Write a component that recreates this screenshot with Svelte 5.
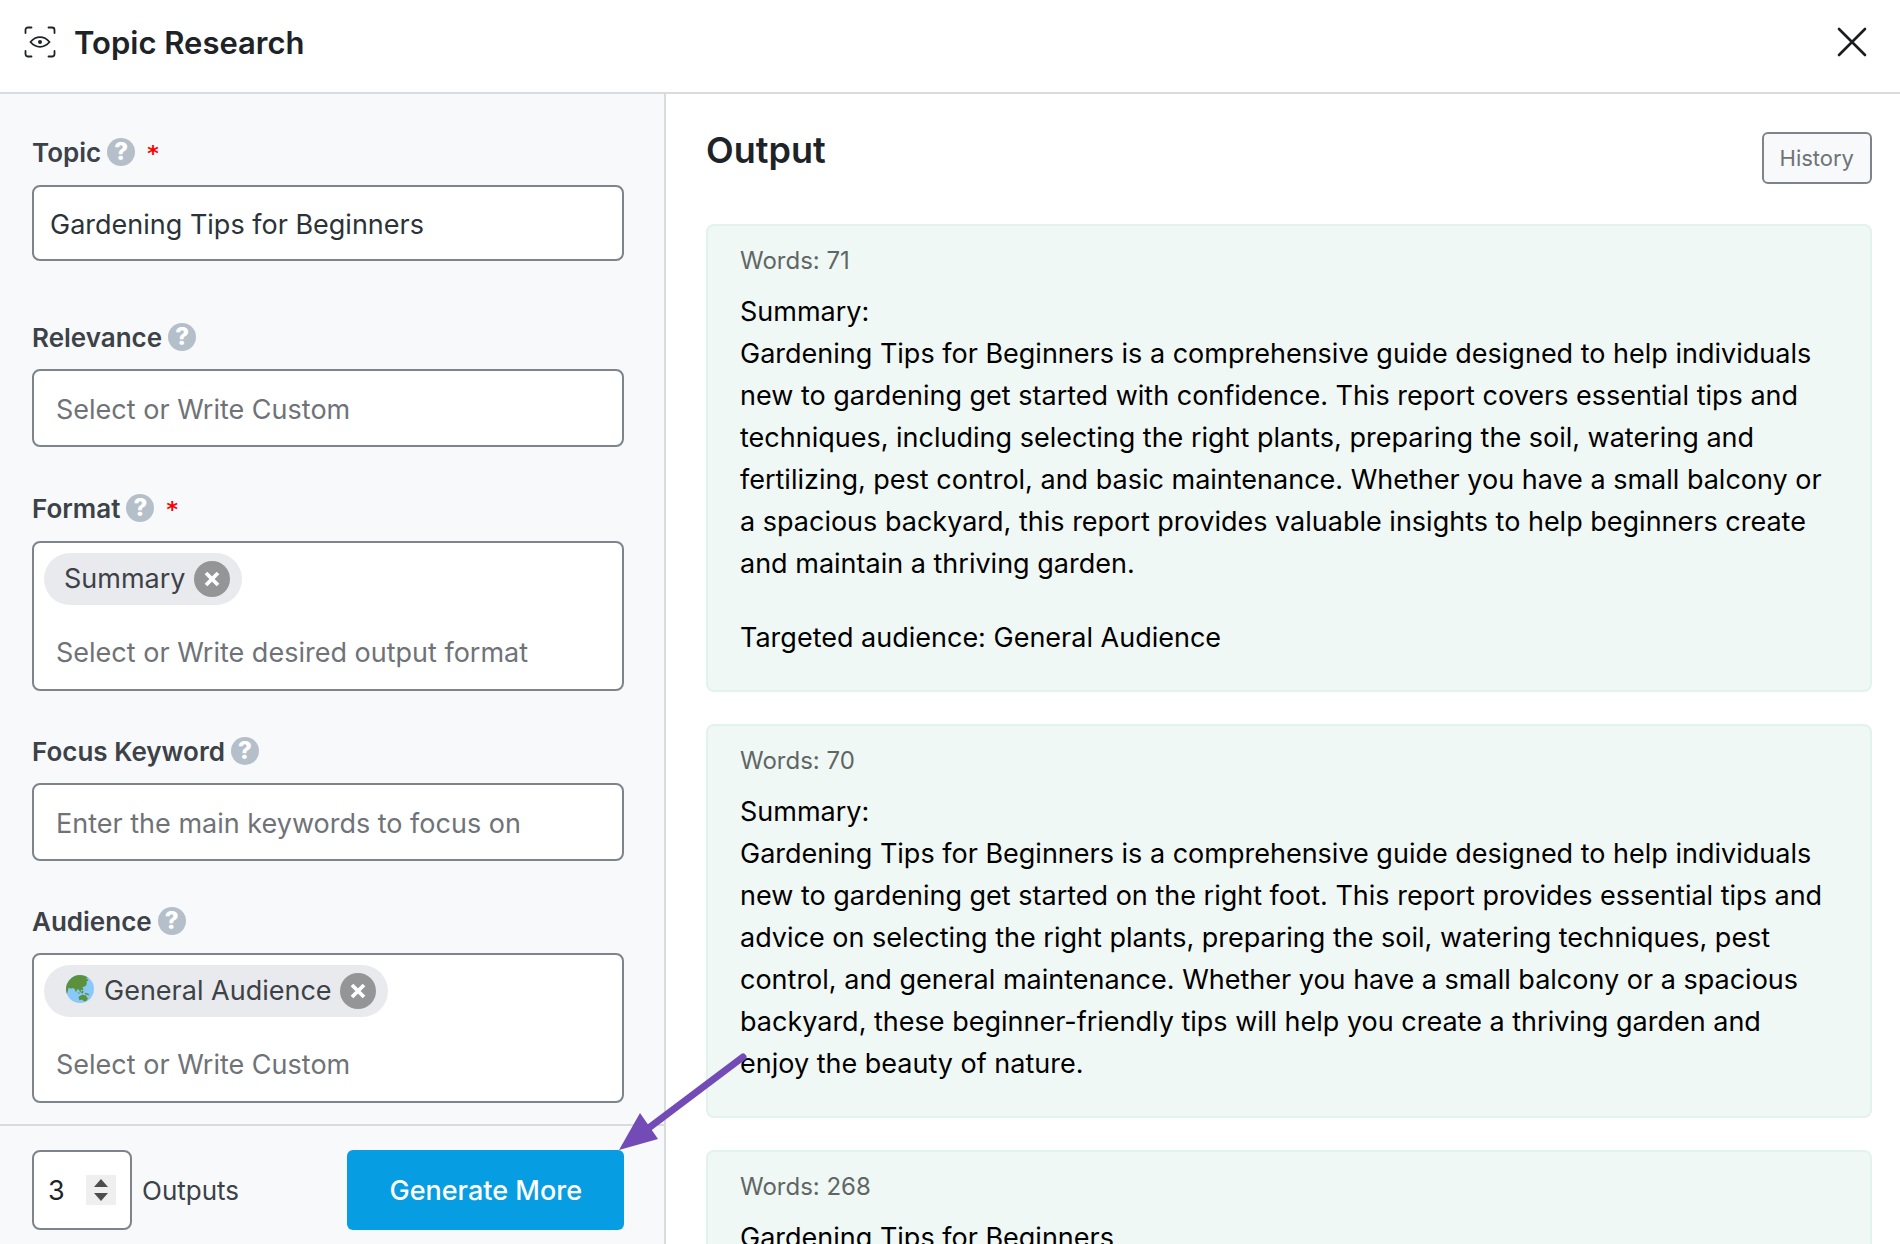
<script>
  let topic = $state('Gardening Tips for Beginners');
  let outputs = $state(3);
  let formats = $state(['Summary']);
  let audiences = $state(['General Audience']);

  const results = [
    {
      words: 71,
      paragraphs: [
        'Summary:\nGardening Tips for Beginners is a comprehensive guide designed to help individuals new to gardening get started with confidence. This report covers essential tips and techniques, including selecting the right plants, preparing the soil, watering and fertilizing, pest control, and basic maintenance. Whether you have a small balcony or a spacious backyard, this report provides valuable insights to help beginners create and maintain a thriving garden.',
        'Targeted audience: General Audience'
      ]
    },
    {
      words: 70,
      paragraphs: [
        'Summary:\nGardening Tips for Beginners is a comprehensive guide designed to help individuals new to gardening get started on the right foot. This report provides essential tips and advice on selecting the right plants, preparing the soil, watering techniques, pest control, and general maintenance. Whether you have a small balcony or a spacious backyard, these beginner-friendly tips will help you create a thriving garden and enjoy the beauty of nature.'
      ]
    },
    { words: 268, paragraphs: ['Gardening Tips for Beginners'] }
  ];
</script>

{#snippet label(id, text, required = false)}
  <div class="label" class:required>
    <label for={id}>{text}</label>
    <span class="help">?</span>
    {#if required}<span class="star">*</span>{/if}
  </div>
{/snippet}

{#snippet remove(name, action)}
  <button class="remove" type="button" aria-label="Remove {name}" onclick={action}>
    <svg viewBox="0 0 36 36" width="36" height="36">
      <circle cx="18" cy="18" r="18" fill="#949596" />
      <path d="M12 12l12 12M24 12l-12 12" stroke="#fff" stroke-width="3.800" />
    </svg>
  </button>
{/snippet}

<div class="page">
  <header>
    <svg class="logo" viewBox="0 0 32 32" width="32" height="32" fill="none" stroke="#1d2327" stroke-width="1.800" stroke-linecap="round">
      <path d="M1.500 7V4a2.500 2.500 0 0 1 2.500-2.500h3.500M24.500 1.500H28A2.500 2.500 0 0 1 30.500 4v3M30.500 25v3a2.500 2.500 0 0 1-2.500 2.500h-3.500M7.500 30.500H4A2.500 2.500 0 0 1 1.500 28v-3" />
      <path d="M6.500 16C9 13 12.300 11.200 16 11.200S23 13 25.500 16C23 19 19.700 20.800 16 20.800S9 19 6.500 16Z" />
      <circle cx="16" cy="16" r="2" fill="#1d2327" stroke="none" />
    </svg>
    <h1>Topic Research</h1>
    <button class="close" type="button" aria-label="Close">
      <svg viewBox="0 0 30 30" width="30" height="30" stroke="#1a1d20" stroke-width="2.600" stroke-linecap="round">
        <path d="M2 2l26 26M28 2L2 28" />
      </svg>
    </button>
  </header>

  <div class="body">
    <aside>
      <form id="research" onsubmit={(e) => e.preventDefault()}>
        <div class="field topic">
          {@render label('topic', 'Topic', true)}
          <input id="topic" class="box" type="text" bind:value={topic} />
        </div>
        <div class="field">
          {@render label('relevance', 'Relevance')}
          <input id="relevance" class="box tall" type="text" placeholder="Select or Write Custom" />
        </div>
        <div class="field">
          {@render label('format', 'Format', true)}
          <div class="tags">
            {#each formats as name}
              <span class="chip">{name}{@render remove(name, () => (formats = []))}</span>
            {/each}
            <input id="format" type="text" placeholder="Select or Write desired output format" />
          </div>
        </div>
        <div class="field">
          {@render label('keyword', 'Focus Keyword')}
          <input id="keyword" class="box tall" type="text" placeholder="Enter the main keywords to focus on" />
        </div>
        <div class="field">
          {@render label('audience', 'Audience')}
          <div class="tags">
            {#each audiences as name}
              <span class="chip">
                <svg class="globe" viewBox="0 0 28 28" width="28" height="28">
                  <circle cx="14" cy="14" r="14" fill="#88c9f9" />
                  <path fill="#5c913b" d="M4.500 4C7 1.300 10.300 0 14 0c3 0 5.500 .9 7.800 2.400L20 3.600l2.300 .8-.8 1.600-1 .4 .3 2.600-1.500 2.300-1.700 .4-1.200 .6 1 1.600-.4 1.700-1.700-1.200-.6 1.500 .5 1.800-1.300-1-1.100-2.200-1.200-.3-1.800 3-1-2.800-1.300-1.400-2.200 .5L2.500 13l-.8 3.500L1 19C.4 17.500 0 16 0 14 0 10 2 6.500 4.500 4Z" />
                  <path fill="#5c913b" d="M12 16.800l1.800 1.800-.4 .5-1.800-1.600ZM15.500 16.200l1.600-.6 .4 1.600-1.300 1.200-1.200-.6ZM18.800 17.800l3.200 .6 1.600 1.600-1.200 .2-3.400-1.200ZM12.600 23l.4-1.600 2.200-1.200 1.800-.6 1.600 .8 .8-1 1.200 2.300 1.200 1.600-.6 1.800-2 1.300-1.600-.4-1.400-1.400-2.800 .6Z" />
                </svg>
                {name}{@render remove(name, () => (audiences = []))}
              </span>
            {/each}
            <input id="audience" type="text" placeholder="Select or Write Custom" />
          </div>
        </div>
      </form>

      <footer>
        <div class="number">
          <input id="outputs" type="number" min="1" bind:value={outputs} />
          <div class="spin">
            <button type="button" aria-label="More" onclick={() => outputs++}>
              <svg viewBox="0 0 14 8" width="14" height="8"><path d="M0 8L7 0l7 8Z" fill="#4d4d4d" /></svg>
            </button>
            <button type="button" aria-label="Fewer" onclick={() => outputs--}>
              <svg viewBox="0 0 14 8" width="14" height="8"><path d="M0 0l7 8 7-8Z" fill="#4d4d4d" /></svg>
            </button>
          </div>
        </div>
        <label class="outputs" for="outputs">Outputs</label>
        <div class="action">
          <button class="generate" type="submit" form="research">Generate More</button>
          <svg class="arrow" viewBox="0 0 130 100" width="130" height="100">
            <path d="M124 7L31 77" stroke="#734bb6" stroke-width="7" stroke-linecap="round" />
            <path d="M0 100L21 63l18 26Z" fill="#734bb6" />
          </svg>
        </div>
      </footer>
    </aside>

    <main>
      <div class="head">
        <h2>Output</h2>
        <button class="history" type="button">History</button>
      </div>
      {#each results as result}
        <article>
          <div class="words">Words: {result.words}</div>
          {#each result.paragraphs as text}
            <p>{text}</p>
          {/each}
        </article>
      {/each}
    </main>
  </div>
</div>

<style>
  :global(body) {
    margin: 0;
  }
  .page,
  .page * {
    box-sizing: border-box;
  }
  .page {
    display: flex;
    flex-direction: column;
    height: 100vh;
    overflow: hidden;
    background: #fff;
    color: #3c4248;
    font: 27px/42px Inter, 'Liberation Sans', sans-serif;
  }
  button,
  input {
    margin: 0;
    font: inherit;
    color: inherit;
  }
  button {
    display: flex;
    align-items: center;
    justify-content: center;
    padding: 0;
    border: 0;
    background: none;
    cursor: pointer;
  }
  svg {
    display: block;
    flex: none;
  }
  h1,
  h2,
  p {
    margin: 0;
  }

  header {
    display: flex;
    align-items: center;
    flex: none;
    padding: 21px 33px 27px 24px;
    border-bottom: 2px solid #d8dcdf;
  }
  h1 {
    flex: 1;
    margin-left: 18px;
    font-size: 31px;
    line-height: 44px;
    font-weight: 600;
    color: #1d2327;
  }
  .logo,
  .close {
    margin-bottom: 2px;
  }
  .body {
    display: flex;
    flex: 1;
    min-height: 0;
  }

  aside {
    display: flex;
    flex-direction: column;
    flex: none;
    width: calc(35% + 1px);
    border-right: 2px solid #d8dcdf;
    background: #f7f9fb;
  }
  form {
    display: flex;
    flex-direction: column;
    flex: 1;
    gap: 44px;
    min-height: 0;
    overflow: hidden;
    padding: 41px 40px 0 32px;
  }
  .topic {
    margin-bottom: 16px;
  }
  .label {
    display: flex;
    align-items: center;
    height: 32px;
    margin-bottom: 16px;
    padding-top: 2px;
    font-size: 26px;
    line-height: 32px;
    font-weight: 600;
  }
  .label.required {
    height: 34px;
  }
  .help {
    width: 28px;
    height: 28px;
    margin: 0 0 2px 6px;
    border-radius: 50%;
    background: #b5bfca;
    color: #fff;
    font-size: 24px;
    line-height: 28px;
    font-weight: 800;
    text-align: center;
  }
  .star {
    margin-left: 12px;
    padding-top: 2px;
    color: #f00;
    font-family: 'DejaVu Sans', sans-serif;
    font-size: 22px;
    font-weight: 700;
  }
  .box,
  .tags,
  .number {
    border: 2px solid #7e848b;
    border-radius: 8px;
    background: #fff;
  }
  .box {
    display: block;
    width: 100%;
    height: 76px;
    padding: 2px 16px 0;
    color: #2c3338;
  }
  .box.tall {
    height: 78px;
    padding: 2px 22px 0;
  }
  ::placeholder {
    color: #6f7378;
    opacity: 1;
  }
  input {
    outline: none;
  }
  .tags {
    display: flex;
    flex-direction: column;
    align-items: flex-start;
    gap: 22px;
    padding: 10px 10px 12px;
  }
  .tags input {
    width: 100%;
    height: 50px;
    padding: 0 12px;
    border: 0;
    background: none;
  }
  .chip {
    display: flex;
    align-items: center;
    height: 52px;
    padding: 0 12px 0 20px;
    border-radius: 26px;
    background: #e9eaed;
  }
  .globe {
    margin: 0 10px 4px 2px;
  }
  .remove {
    margin-left: 8px;
  }

  footer {
    display: flex;
    align-items: center;
    flex: none;
    padding: 24px 40px 14px 32px;
    border-top: 2px solid #d8dcdf;
  }
  .number {
    display: flex;
    align-items: center;
    width: 100px;
    height: 80px;
    padding: 0 14px;
  }
  .number input {
    width: 38px;
    padding: 2px 0 0;
    border: 0;
    background: none;
    color: #1d2327;
    appearance: textfield;
  }
  .number input::-webkit-inner-spin-button {
    appearance: none;
  }
  .spin {
    display: flex;
    flex-direction: column;
    justify-content: center;
    gap: 6px;
    flex: none;
    width: 30px;
    height: 30px;
    background: #efefef;
  }
  .outputs {
    margin-left: 10px;
    padding-top: 2px;
    font-size: 26px;
  }
  .action {
    position: relative;
    margin-left: auto;
  }
  .generate {
    padding: 20px 42px 18px;
    border-radius: 6px;
    background: #069de3;
    color: #fff;
    font-weight: 500;
  }
  .arrow {
    position: absolute;
    left: calc(100% - 5px);
    bottom: 100%;
    z-index: 1;
    pointer-events: none;
  }

  main {
    display: flex;
    flex-direction: column;
    flex: 1;
    gap: 32px;
    min-width: 0;
    overflow: hidden;
    padding: 38px 28px 0 40px;
  }
  .head {
    display: flex;
    justify-content: space-between;
    align-items: flex-start;
    flex: none;
    height: 60px;
  }
  h2 {
    font-size: 36px;
    line-height: 36px;
    font-weight: 600;
    color: #1d2327;
  }
  .history {
    height: 52px;
    padding: 0 16px;
    border: 2px solid #7e848b;
    border-radius: 6px;
    background: #f7f9fb;
    color: #6f7378;
    font-size: 22px;
  }
  article {
    flex: none;
    padding: 18px 40px 31px 32px;
    border: 2px solid #e2f2ed;
    border-radius: 8px;
    background: #f0f8f6;
    color: #000;
  }
  .words {
    margin-bottom: 13px;
    color: #5f6664;
    font-size: 24px;
    line-height: 34px;
  }
  p {
    white-space: pre-line;
  }
  p + p {
    margin-top: 32px;
  }
</style>
